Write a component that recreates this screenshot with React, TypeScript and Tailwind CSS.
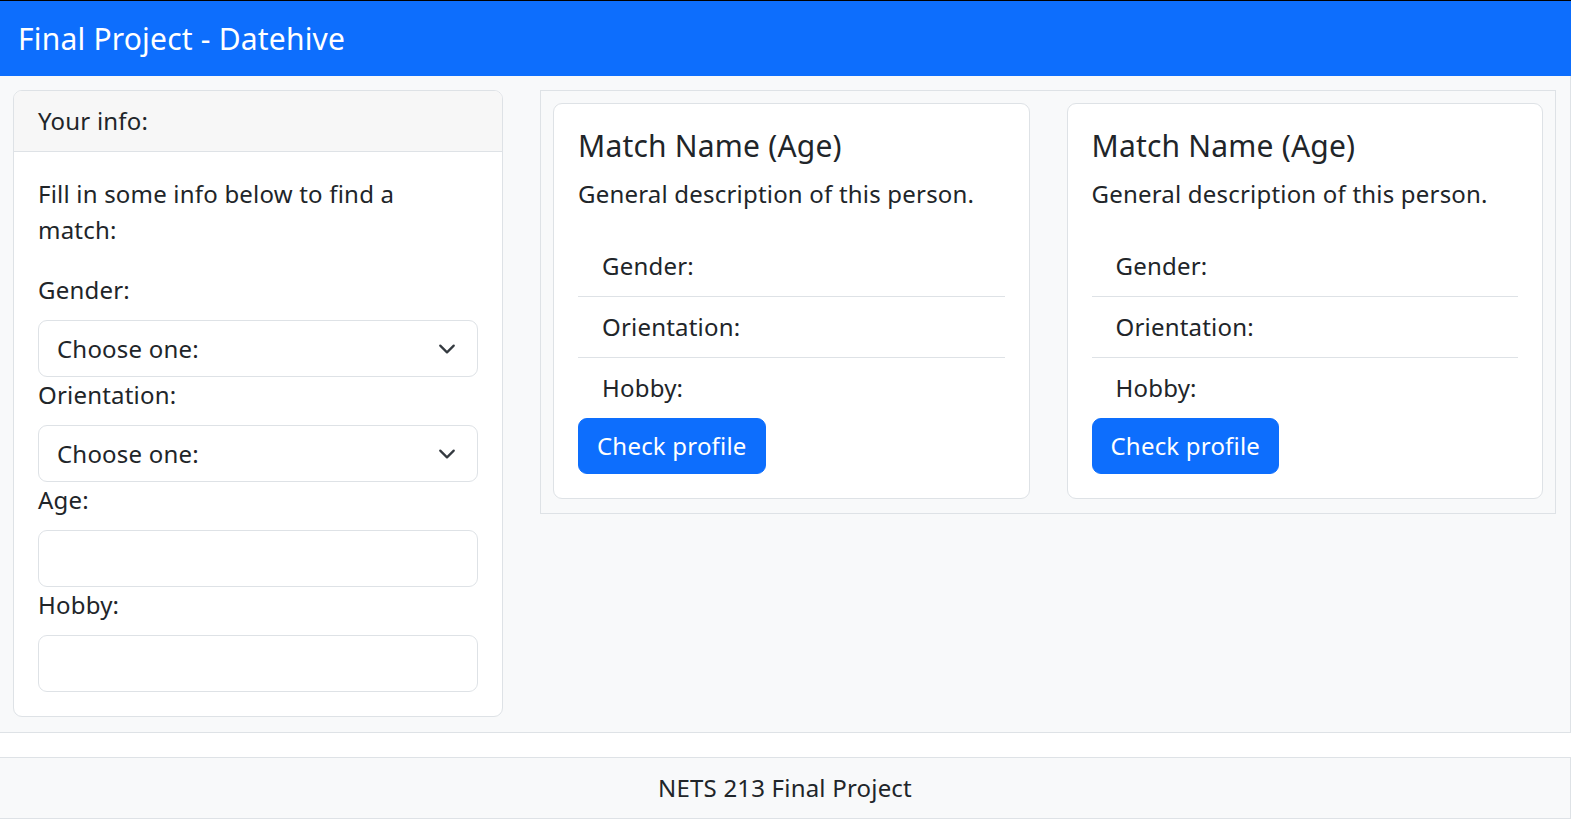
import React from "react";

const font = { fontFamily: '"Noto Sans", "Open Sans", sans-serif' };

function Chevron() {
  return (
    <svg width="24" height="18" viewBox="0 0 16 16" className="shrink-0">
      <path d="m2 5 6 6 6-6" fill="none" stroke="#343a40" strokeWidth="2" strokeLinecap="round" strokeLinejoin="round" />
    </svg>
  );
}

function SelectBox() {
  return (
    <div className="flex items-center justify-between h-[57px] border border-[#dee2e6] rounded-[9px] bg-white pl-[18px] pr-[18px] text-[24px] leading-[36px] text-[#212529]">
      <span>Choose one:</span>
      <Chevron />
    </div>
  );
}

function InputBox() {
  return <div className="h-[57px] border border-[#dee2e6] rounded-[9px] bg-white" />;
}

function Label({ children }: { children: React.ReactNode }) {
  return <div className="text-[24px] leading-[36px] mb-[12px] text-[#212529]">{children}</div>;
}

function MatchCard() {
  return (
    <div className="flex-1 bg-white border border-[#dee2e6] rounded-[9px] p-[24px] text-[#212529]">
      <div className="text-[30px] leading-[36px] mb-[12px]">Match Name (Age)</div>
      <div className="text-[24px] leading-[36px] mb-[24px]">General description of this person.</div>
      <div className="flex flex-col">
        <div className="px-[24px] py-[12px] text-[24px] leading-[36px] border-b border-[#dee2e6]">Gender:</div>
        <div className="px-[24px] py-[12px] text-[24px] leading-[36px] border-b border-[#dee2e6]">Orientation:</div>
        <div className="px-[24px] py-[12px] text-[24px] leading-[36px]">Hobby:</div>
      </div>
      <div className="flex">
        <button className="bg-[#0d6efd] text-white border border-[#0d6efd] rounded-[9px] px-[18px] py-[9px] text-[24px] leading-[36px]">
          Check profile
        </button>
      </div>
    </div>
  );
}

export default function App() {
  return (
    <div className="w-full min-h-screen bg-white tracking-[0.2px]" style={font}>
      <div className="border-t border-black bg-[#0d6efd] h-[76px] flex items-center px-[18px]">
        <span className="text-white text-[30px] leading-[36px]">Final Project - Datehive</span>
      </div>
      <div className="bg-[#f8f9fa] border-r border-b border-[#dee2e6] flex items-start pt-[14px] pb-[15px] pl-[13px] pr-[14px] gap-[37px]">
        <div className="w-[490px] shrink-0 bg-white border border-[#dee2e6] rounded-[9px] overflow-hidden text-[#212529]">
          <div className="bg-[#f7f7f7] border-b border-[#dee2e6] px-[24px] py-[12px] text-[24px] leading-[36px]">Your info:</div>
          <div className="p-[24px]">
            <p className="text-[24px] leading-[36px] mb-[24px] max-w-[400px]">Fill in some info below to find a match:</p>
            <Label>Gender:</Label>
            <SelectBox />
            <Label>Orientation:</Label>
            <SelectBox />
            <Label>Age:</Label>
            <InputBox />
            <Label>Hobby:</Label>
            <InputBox />
          </div>
        </div>
        <div className="flex-1 border border-[#dee2e6] flex gap-[37px] pt-[12px] pb-[14px] px-[12px]">
          <MatchCard />
          <MatchCard />
        </div>
      </div>
      <div className="mt-[24px] bg-[#f8f9fa] border-t border-b border-r border-[#dee2e6] h-[62px] flex items-center justify-center text-[24px] leading-[36px] text-[#212529]">
        NETS 213 Final Project
      </div>
    </div>
  );
}
